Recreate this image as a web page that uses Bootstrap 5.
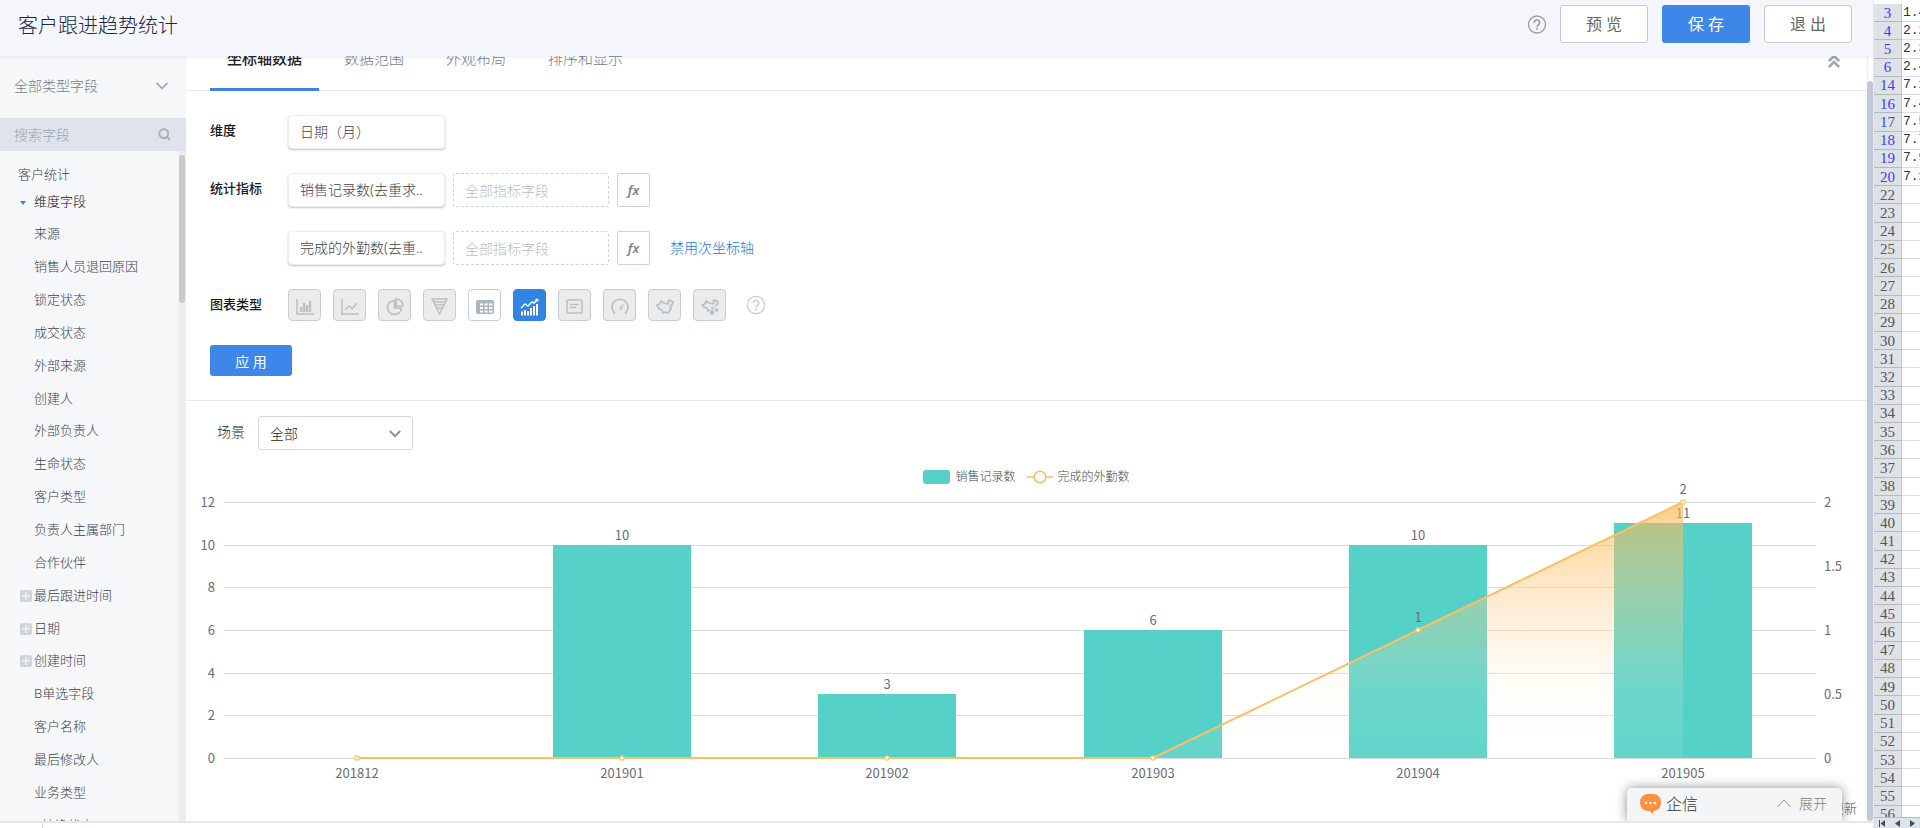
<!DOCTYPE html>
<html lang="zh-CN">
<head>
<meta charset="utf-8">
<meta name="viewport" content="width=device-width, initial-scale=1">
<title>客户跟进趋势统计</title>
<link href="https://cdn.jsdelivr.net/npm/bootstrap@5.3.0/dist/css/bootstrap.min.css" rel="stylesheet">
<style>
  body { font-family: "Noto Sans", "Noto Sans CJK SC", sans-serif; font-size: 14px; line-height: 20px; font-weight: 300; color: #424754; }
  svg { display: block; flex: none; }
  .topbar { height: 56px; background: #f4f6fb; padding: 4px 21px 12px 18px; gap: 14px; box-shadow: 0 1px 5px rgba(60, 70, 90, .1); z-index: 5; }
  .topbar h1 { font-size: 20px; line-height: 32px; padding-top: 4px; font-weight: 300; color: #20264a; }
  .topbar .btn { width: 88px; height: 38px; padding: 0; font-size: 16px; border-radius: 3px; }
  .btn-plain { background: #fff; border: 1px solid #c5c7cc; color: #666; }
  .btn-main { background: #3f86e9; border: 0; color: #fff; font-weight: 400; }
  .icon-btn { background: none; border: 0; padding: 0; }

  .side { width: 186px; background: #f6f7f9; }
  .side-type { height: 62px; padding: 0 18px 2px 14px; }
  .plain-select { appearance: none; background: none; border: 0; padding: 0; color: inherit; font-weight: inherit; outline: 0; }
  .side-type .plain-select { color: #757b86; }
  .side-search { height: 33px; background: #dfe4ec; padding: 0 15px 0 14px; }
  .side-search input { background: none; border: 0; padding: 0; outline: 0; min-width: 0; font-weight: 300; }
  .side-search input::placeholder { color: #98a3b1; opacity: 1; }
  .tree { font-size: 13px; margin-bottom: -20px; padding: 11px 0 0 15px; color: #3c414e; }
  .tree-root { line-height: 24px; padding-left: 3px; }
  .tree-group { line-height: 31px; color: #0c0e13; }
  .tree-group svg { margin: 3px 8px 0 5px; }
  .tree li { flex: 1 1 0; display: flex; align-items: center; padding-left: 19px; }
  .tree li.expandable { padding-left: 5px; gap: 2px; }
  .plus { width: 12px; height: 12px; border-radius: 2px; background: #cfd5dc; margin-top: 2px; }
  .rail { width: 7px; background: #ededee; padding: 4px 1px 0 0; }
  .rail div { width: 6px; height: 148px; border-radius: 3px; background: #c9c9ca; }

  .tabs { height: 64px; margin-top: -29px; border-bottom: 1px solid #e9e9eb; padding: 0 27px 0 24px; gap: 8px; }
  .tabs a { padding: 0 17px; line-height: 62px; font-size: 15px; color: #767d87; text-decoration: none; height: 64px; }
  .tabs a.on { color: #1f2228; font-weight: 500; border-bottom: 3px solid #3b86e3; }
  .tabs .icon-btn { padding-top: 4px; }
  .setup { padding: 24px; gap: 24px; border-bottom: 1px solid #e9e9eb; }
  .setup-label { width: 78px; font-size: 13px; font-weight: 500; color: #15171c; line-height: 31px; }
  .field { width: 157px; height: 34px; padding: 0 11px; border: 1px solid #eceef0; border-radius: 4px; background: #fff; box-shadow: 0 1px 2px rgba(60, 70, 80, .32); line-height: 32px; color: #3c424d; text-align: left; font-weight: 300; }
  .dropzone { width: 156px; height: 34px; border: 1px dashed #cbd6e6; border-radius: 3px; padding: 0 11px; color: #b9bec6; line-height: 34px; }
  .fx { width: 33px; height: 34px; border: 1px solid #c6d3e4; border-radius: 2px; background: #fff; padding: 0; color: #7d828c; font: italic 600 13px/30px "Noto Sans", sans-serif; }
  .link-axis { color: #2478dd; text-decoration: none; padding-left: 12px; }
  .kinds { gap: 12px; }
  .kind { width: 33px; height: 32px; border: 1px solid #c3cedb; border-radius: 4px; background: #ebebeb; color: #bfbfbf; padding: 0; display: grid; place-items: center; }
  .kind.open { background: #fff; color: #a9b5c1; }
  .kind.geo { color: #b4bfca; }
  .kind.on { background: #3383e2; border-color: #3383e2; color: #fff; }
  .kind svg { margin-top: 3px; }
  .btn-apply { width: 82px; height: 31px; padding: 1px 0 0; font-size: 14px; border-radius: 3px; }

  .scene { padding: 15px 31px 0; gap: 13px; color: #1b1d22; }
  .scene label { padding-bottom: 2px; }
  .scene-box { width: 155px; height: 34px; border: 1px solid #d8dadd; border-radius: 3px; padding: 2px 11px 0; }
  .legend-row { margin-top: 19px; height: 16px; font-size: 12px; color: #424754; gap: 11px; }
  .legend-row > span { gap: 5px; }
  .swatch { width: 27px; height: 14px; border-radius: 3px; background: #55d1c7; }
  .plot { width: 100%; height: 304px; overflow: visible; font: 400 13px "Noto Sans CJK SC", sans-serif; }
  .stamp { font-size: 13px; padding: 9px 10px 0; color: #555; }
  .page-rail { width: 6px; padding-top: 25px; border-left: 1px solid #eee; }
  .page-rail div { width: 6px; margin-left: -1px; border-radius: 3px; background: #c1c9d8; }
  .dock-clip { position: absolute; right: 6px; bottom: 0; width: 260px; height: 60px; overflow: hidden; }
  .dock { position: absolute; right: 25px; bottom: 0; width: 215px; height: 33px; background: #f4f5f7; border: 0; border-radius: 5px 5px 0 0; box-shadow: 0 0 12px rgba(0, 0, 0, .45); padding: 0 15px 2px 13px; color: #7c7e82; font-weight: 300; }
  .dock-name { font-size: 16px; color: #36383d; padding-left: 5px; }
  .under { height: 7px; border-top: 2px solid #e6e7e9; box-sizing: border-box; }
  .under div { width: 43px; border-right: 1px solid #dcdcdc; }

  .sheet { width: 47px; border-left: 1px solid #e6e8eb; background: #fff; }
  .sheet-body { padding-top: 4px; }
  .sheet table { height: calc(100% + 7px); border-collapse: separate; border-spacing: 0; table-layout: fixed; }
  .sheet th, .sheet td { padding: 0; line-height: 14px; border-bottom: 1px solid #dcdee1; white-space: nowrap; overflow: hidden; }
  .sheet th { width: 28px; background: #dee2e7; border-bottom-color: #b5b9be; border-right: 1px solid #c3c7cc; color: #555; text-align: center; font: 400 15px/14px "Liberation Serif", serif; }
  .sheet th.hit { color: #3a3aff; }
  .sheet td { color: #333; font-size: 13px; font-family: "Liberation Mono", monospace; padding-left: 1px; }
  .sheet-nav { height: 11px; background: #dde3ea; border-top: 1px solid #b9bec5; color: #444c58; padding: 2px 0 0 5px; gap: 10px; }
</style>
</head>
<body class="vh-100 overflow-hidden d-flex">

<div class="flex-grow-1 d-flex flex-column overflow-hidden">
  <header class="topbar d-flex align-items-center position-relative">
    <h1 class="mb-0 me-auto">客户跟进趋势统计</h1>
    <button class="icon-btn" type="button" aria-label="帮助">
      <svg width="19" height="20" viewBox="0 0 19 20" fill="none" stroke="#9b9da1" stroke-width="1.3"><circle cx="10" cy="10.500" r="8.500"/><path d="M7.300 8.700a2.700 2.700 0 1 1 4.200 2.100c-1 .7-1.500 1-1.500 2.200" stroke-width="1.700"/><path d="M10 14.100v1.700" stroke-width="1.800"/></svg>
    </button>
    <button class="btn btn-plain" type="button">预 览</button>
    <button class="btn btn-main" type="button">保 存</button>
    <button class="btn btn-plain" type="button">退 出</button>
  </header>

  <div class="flex-grow-1 d-flex overflow-hidden position-relative">
    <aside class="side d-flex flex-column flex-shrink-0">
      <div class="side-type d-flex align-items-center flex-shrink-0">
        <select class="plain-select flex-grow-1" aria-label="字段类型"><option>全部类型字段</option></select>
        <svg width="12" height="12" viewBox="0 0 12 12" fill="none" stroke="#a6adb5" stroke-width="1.8"><path d="M.6 3L6 8.400 11.400 3"/></svg>
      </div>
      <div class="side-search d-flex align-items-center flex-shrink-0">
        <input class="flex-grow-1" type="text" placeholder="搜索字段" aria-label="搜索字段">
        <svg width="13" height="13" viewBox="0 0 13 13" fill="none" stroke="#a5afba" stroke-width="1.900"><circle cx="5.800" cy="5.600" r="4.400"/><path d="M9 9l3.200 3.200"/></svg>
      </div>
      <div class="flex-grow-1 d-flex overflow-hidden">
        <div class="tree flex-grow-1 d-flex flex-column">
          <div class="tree-root">客户统计</div>
          <div class="tree-group d-flex align-items-center"><svg width="6" height="4" viewBox="0 0 6 4"><path d="M0 0h6L3 4z" fill="#3b86e3"/></svg>维度字段</div>
          <ul class="list-unstyled mb-0 flex-grow-1 d-flex flex-column" id="fields"></ul>
        </div>
        <div class="rail"><div></div></div>
      </div>
    </aside>

    <main class="flex-grow-1 overflow-hidden">
      <nav class="tabs d-flex">
        <a class="on" href="#">坐标轴数据</a>
        <a href="#">数据范围</a>
        <a href="#">外观布局</a>
        <a href="#">排序和显示</a>
        <button class="icon-btn ms-auto" type="button" aria-label="收起">
          <svg width="12" height="14" viewBox="0 0 12 14" fill="none" stroke="#9fa8b1" stroke-width="2.600"><path d="M.8 7L6 2l5.200 5M.8 13L6 8l5.200 5"/></svg>
        </button>
      </nav>

      <section class="setup d-flex flex-column">
        <div class="d-flex">
          <div class="setup-label">维度</div>
          <button class="field" type="button">日期（月）</button>
        </div>
        <div class="d-flex">
          <div class="setup-label">统计指标</div>
          <div class="d-flex gap-2">
            <button class="field" type="button">销售记录数(去重求..</button>
            <div class="dropzone">全部指标字段</div>
            <button class="fx" type="button">fx</button>
          </div>
        </div>
        <div class="d-flex">
          <div class="setup-label"></div>
          <div class="d-flex gap-2">
            <button class="field" type="button">完成的外勤数(去重..</button>
            <div class="dropzone">全部指标字段</div>
            <button class="fx" type="button">fx</button>
            <a class="link-axis align-self-center" href="#">禁用次坐标轴</a>
          </div>
        </div>
        <div class="d-flex">
          <div class="setup-label">图表类型</div>
          <div class="d-flex align-items-center kinds">
            <button class="kind" type="button" aria-label="柱状图"><svg width="18" height="16" viewBox="0 0 18 16" fill="none" stroke="currentColor"><path d="M1 0v15h17" stroke-width="1.500"/><path d="M5 13V8M8 13V4M11 13V6M14 13V2" stroke-width="2.300"/></svg></button>
            <button class="kind" type="button" aria-label="折线图"><svg width="18" height="16" viewBox="0 0 18 16" fill="none" stroke="currentColor" stroke-width="1.500"><path d="M1 0v15h17M4 11l4-4 3 3 5-6"/></svg></button>
            <button class="kind" type="button" aria-label="饼图"><svg width="18" height="18" viewBox="0 0 18 18" fill="none" stroke="currentColor" stroke-width="1.700"><path d="M8.500 2.500a7 7 0 1 0 7 8"/><path d="M10 1v7h7a7 7 0 0 0-7-7zM8.500 2.500V10h7"/></svg></button>
            <button class="kind" type="button" aria-label="漏斗图"><svg width="17" height="17" viewBox="0 0 17 17" fill="none" stroke="currentColor" stroke-width="1.400"><path d="M1 1h15L8.500 16zM3 4h11M4.500 7h8M6 10h5"/></svg></button>
            <button class="kind open" type="button" aria-label="数据表"><svg width="18" height="14" viewBox="0 0 18 14"><rect width="18" height="14" rx="2" fill="currentColor"/><path d="M4 3.500h3v2H4zM8.500 3.500h3v2h-3zM13 3.500h3.500v2H13zM4 7h3v2H4zM8.500 7h3v2h-3zM13 7h3.500v2H13zM4 10.500h3v2H4zM8.500 10.500h3v2h-3zM13 10.500h3.500v2H13z" fill="#fff"/></svg></button>
            <button class="kind on" type="button" aria-label="双轴图"><svg width="19" height="18" viewBox="0 0 19 18" fill="none" stroke="currentColor"><path d="M2 17.500v-4M5 17.500V12M8 17.500v-4.500M11 17.500V10M14 17.500V8M17 17.500V6" stroke-width="2"/><path d="M1 10l4-4 3 2 4-4 2 1 3-3" stroke-width="1.500"/><circle cx="17" cy="2" r="1.600" fill="currentColor" stroke="none"/></svg></button>
            <button class="kind" type="button" aria-label="指标卡"><svg width="17" height="15" viewBox="0 0 17 15" fill="none" stroke="currentColor" stroke-width="1.500"><rect x="1" y="1" width="15" height="13" rx="1"/><path d="M4 5.500h9M4 8.500h6"/></svg></button>
            <button class="kind" type="button" aria-label="仪表盘"><svg width="18" height="17" viewBox="0 0 18 17" fill="none" stroke="currentColor" stroke-width="1.700"><path d="M4 15.500a8 8 0 1 1 10 0"/><path d="M8 10.500L13.500 5 10 12z" fill="currentColor" stroke="none"/></svg></button>
            <button class="kind geo" type="button" aria-label="地图"><svg width="18" height="16" viewBox="0 0 18 16" fill="none" stroke="currentColor" stroke-width="1.700" stroke-linejoin="round"><path d="M1 6l3-1 1-3 3 2 4 1 1-2-1-1 2-1 3 2-1 3-2 1 1 3-3 4-3-1-2 1-1-3-3-1z"/></svg></button>
            <button class="kind geo" type="button" aria-label="气泡地图"><svg width="18" height="16" viewBox="0 0 18 16" fill="none" stroke="currentColor" stroke-width="1.700" stroke-linejoin="round"><path d="M9 11l-2 1-1-3-3-1-2-2 3-1 1-3 3 2 4 1 1-2-1-1 2-1 3 2-1 3-2 1"/><g fill="currentColor" stroke="none"><circle cx="11" cy="13.500" r="2.200"/><circle cx="15.500" cy="11" r="1.800"/><circle cx="11.500" cy="9" r="1.500"/></g></svg></button>
            <button class="icon-btn ms-2" type="button" aria-label="图表帮助"><svg width="20" height="20" viewBox="0 0 20 20" fill="none" stroke="#c6c8cb" stroke-width="1.200"><circle cx="10" cy="10" r="8.600"/><path d="M7.300 8.200a2.700 2.700 0 1 1 4.200 2.100c-1 .7-1.500 1-1.500 2.200" stroke-width="1.500"/><path d="M10 13.600v1.700" stroke-width="1.600"/></svg></button>
          </div>
        </div>
        <button class="btn btn-main btn-apply" type="button">应 用</button>
      </section>

      <section>
        <div class="scene d-flex align-items-center">
          <label for="scene">场景</label>
          <div class="scene-box d-flex align-items-center">
            <select class="plain-select flex-grow-1" id="scene"><option>全部</option></select>
            <svg width="12" height="12" viewBox="0 0 12 12" fill="none" stroke="#8f9194" stroke-width="2"><path d="M.8 3L6 8.200 11.200 3"/></svg>
          </div>
        </div>
        <div class="legend-row d-flex justify-content-center align-items-center">
          <span class="d-flex align-items-center"><span class="swatch"></span>销售记录数</span>
          <span class="d-flex align-items-center"><svg width="26" height="14" viewBox="0 0 26 14" fill="none" stroke="#fcbf64" stroke-width="1.500"><path d="M0 7h7M19 7h7"/><circle cx="13" cy="7" r="5.800"/></svg>完成的外勤数</span>
        </div>
        <svg class="plot" id="plot" role="img" aria-label="客户跟进趋势图"></svg>
        <div class="stamp text-end">更新</div>
      </section>
    </main>

    <div class="page-rail d-flex flex-shrink-0"><div></div></div>
    <div class="dock-clip">
      <button class="dock d-flex align-items-center" type="button">
        <svg width="21" height="20" viewBox="0 0 21 20"><path d="M8 0h5a8 8 0 0 1 8 8v1a8 8 0 0 1-7.500 8L12.500 20 10 17H8a8 8 0 0 1-8-8V8a8 8 0 0 1 8-8z" fill="#fd9140"/><g fill="#fff"><circle cx="6" cy="9" r="1.300"/><circle cx="10.500" cy="9" r="1.300"/><circle cx="15" cy="9" r="1.300"/></g></svg>
        <span class="dock-name me-auto">企信</span>
        <svg class="me-2" width="14" height="9" viewBox="0 0 14 9" fill="none" stroke="#8b8d91"><path d="M.5 8L7 1l6.500 7"/></svg>
        <span>展开</span>
      </button>
    </div>
  </div>
  <div class="under d-flex"><div></div></div>
</div>

<aside class="sheet d-flex flex-column flex-shrink-0">
  <div class="sheet-body flex-grow-1 overflow-hidden">
    <table class="w-100"><tbody id="rows"></tbody></table>
  </div>
  <div class="sheet-nav d-flex flex-shrink-0">
    <svg width="6" height="7" viewBox="0 0 6 7" fill="currentColor"><path d="M0 0h1v7H0zM6 0v7L1.500 3.500z"/></svg>
    <svg width="5" height="7" viewBox="0 0 5 7" fill="currentColor"><path d="M5 0v7L0 3.500z"/></svg>
    <svg width="5" height="7" viewBox="0 0 5 7" fill="currentColor"><path d="M0 0v7l5-3.500z"/></svg>
  </div>
</aside>

<script src="https://cdn.jsdelivr.net/npm/bootstrap@5.3.0/dist/js/bootstrap.bundle.min.js"></script>
<script>
  // Field tree; a leading "+" marks a field that can be expanded
  const fields = ['来源', '销售人员退回原因', '锁定状态', '成交状态', '外部来源', '创建人', '外部负责人', '生命状态', '客户类型', '负责人主属部门', '合作伙伴', '+最后跟进时间', '+日期', '+创建时间', 'B单选字段', '客户名称', '最后修改人', '业务类型', '1转换状态'];
  const plus = '<svg class="plus" viewBox="0 0 12 12" stroke="#fff"><path d="M6 2v8M2 6h8"/></svg>';
  document.getElementById('fields').innerHTML = fields.map(f =>
    f[0] === '+' ? `<li class="expandable">${plus}${f.slice(1)}</li>` : `<li>${f}</li>`).join('');

  // Spreadsheet rows: filtered rows first, then the empty ones
  const filled = [[3, '1.4'], [4, '2.2'], [5, '2.3'], [6, '2.4'], [14, '7.1'], [16, '7.4'], [17, '7.5'], [18, '7.7'], [19, '7.9'], [20, '7.1']];
  let rows = filled.map(([n, v]) => `<tr><th class="hit">${n}</th><td>${v}</td></tr>`).join('');
  for (let n = 22; n <= 56; n++) rows += `<tr><th>${n}</th><td></td></tr>`;
  document.getElementById('rows').innerHTML = rows;

  // Combined chart: bars on the left axis (0-12), line with area on the right axis (0-2)
  const months = ['201812', '201901', '201902', '201903', '201904', '201905'];
  const bars = [0, 10, 3, 6, 10, 11];
  const line = [0, 0, 0, 0, 1, 2];
  const plot = document.getElementById('plot');

  function draw() {
    const left = 38, right = plot.clientWidth - 51, top = 17, h = 256, base = top + h;
    const step = (right - left) / months.length;
    const cx = i => Math.round(left + step * (i + .5));
    const y1 = v => Math.round(base - v / 12 * h);
    const y2 = v => Math.round(base - v / 2 * h);
    const text = (x, y, t, anchor = 'middle') => `<text x="${x}" y="${y}" text-anchor="${anchor}">${t}</text>`;
    let grid = '', labels = '', cols = '', values = '', dots = '';
    for (let v = 0; v <= 12; v += 2) {
      grid += `<path d="M${left} ${y1(v) + .5}H${right}"/>`;
      labels += text(left - 9, y1(v) + 5, v, 'end');
    }
    for (let v = 0; v <= 2; v += .5) labels += text(right + 8, y2(v) + 5, v, 'start');
    const bw = Math.round(step * .52);
    months.forEach((m, i) => {
      labels += text(cx(i), base + 20, m);
      if (bars[i]) {
        cols += `<rect x="${cx(i) - bw / 2}" y="${y1(bars[i])}" width="${bw}" height="${base - y1(bars[i])}"/>`;
        values += text(cx(i), y1(bars[i]) - 5, bars[i]);
      }
      dots += `<circle cx="${cx(i)}" cy="${y2(line[i])}" r="2.2"/>`;
    });
    const pts = line.map((v, i) => `${cx(i)},${y2(v)}`).join(' ');
    plot.innerHTML =
      `<defs><linearGradient id="fade" x2="0" y2="1"><stop stop-color="#fdb44d" stop-opacity=".66"/><stop offset=".55" stop-color="#fdd9a0" stop-opacity=".27"/><stop offset=".75" stop-color="#fff3df" stop-opacity=".14"/><stop offset="1" stop-color="#fff" stop-opacity=".08"/></linearGradient></defs>
       <g stroke="#dcdddf">${grid}</g><g fill="#55d1c7">${cols}</g>
       <g fill="#6a6d77">${values}</g>
       <polygon points="${cx(0)},${base} ${pts} ${cx(5)},${base}" fill="url(#fade)"/>
       <polyline points="${pts}" fill="none" stroke="#fcbf64" stroke-width="2"/>
       <g fill="#fff" stroke="#fcbf64" stroke-width="1.2">${dots}</g>
       <g fill="#6a6d77">${labels}${text(cx(4), y2(1) - 8, 1)}${text(cx(5), y2(2) - 8, 2)}</g>`;
  }
  draw();
  addEventListener('resize', draw);
</script>
</body>
</html>
